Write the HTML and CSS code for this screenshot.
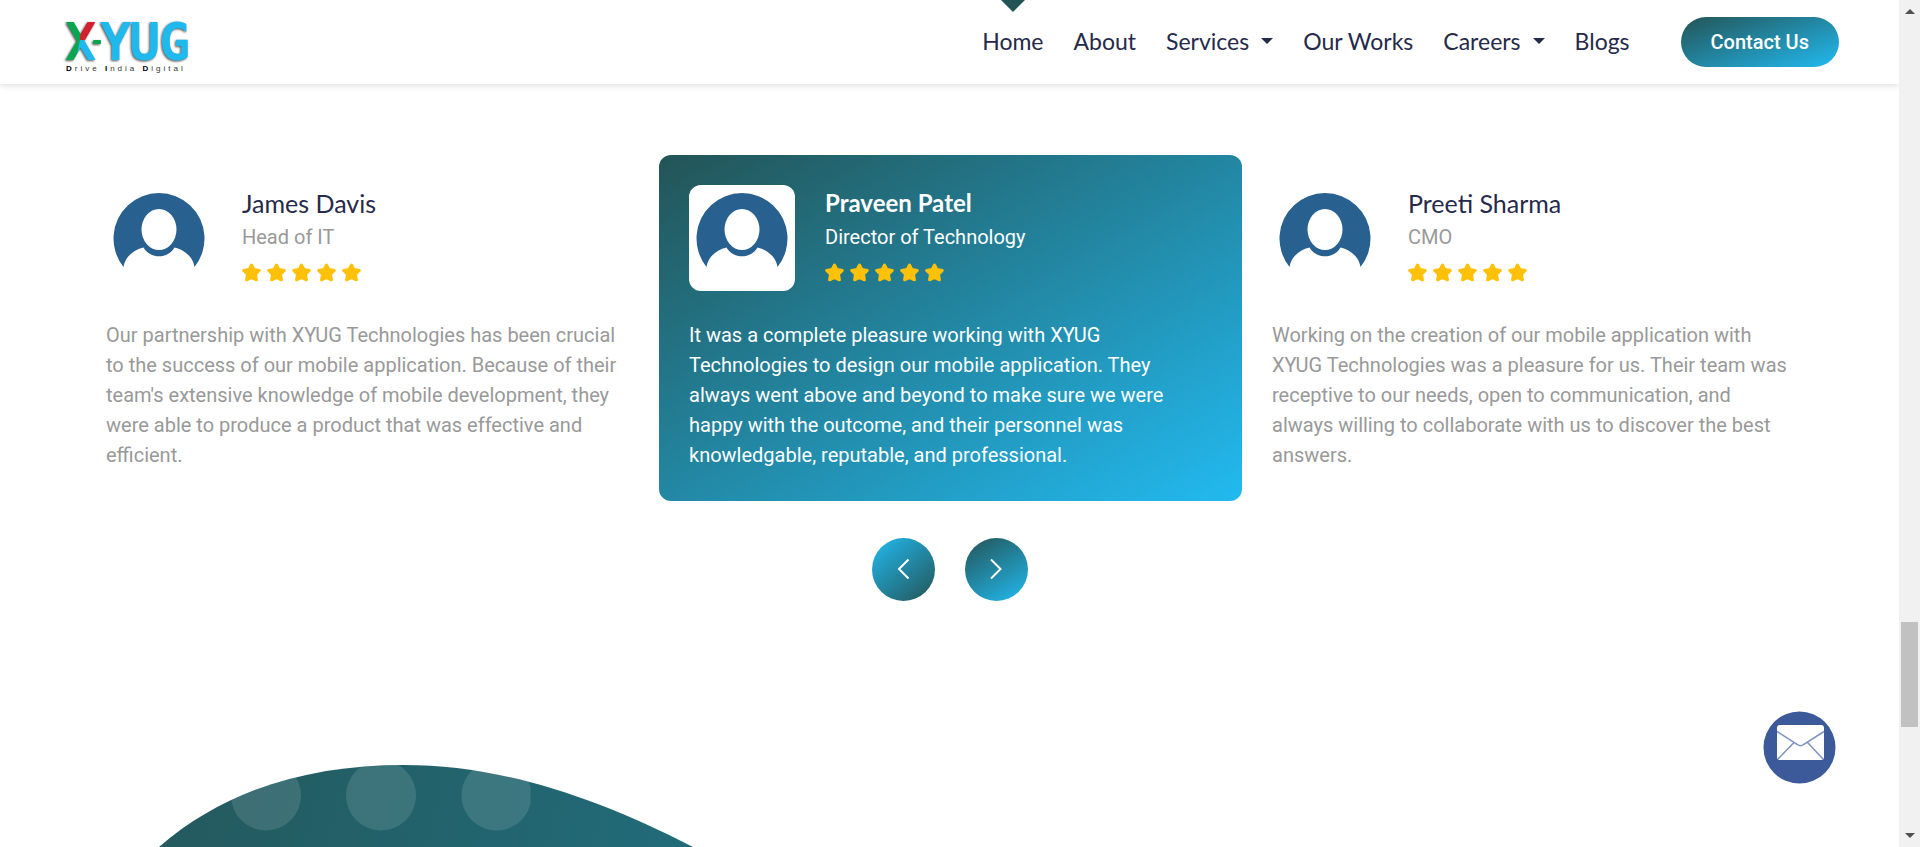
FILE: index.html
```html
<!DOCTYPE html>
<html lang="en">
<head>
<meta charset="utf-8">
<title>X-YUG Testimonials</title>
<link rel="stylesheet" href="styles.css">
</head>
<body>
<svg class="defs" aria-hidden="true">
  <symbol id="avatar" viewBox="0 0 106 106">
    <path fill="#286090" d="M17.500 82A45.500 45.500 0 1 1 88.500 82C87 72 79 65 68.500 62.500A18 18 0 0 1 37.500 62.500C27 65 19 72 17.500 82Z"/>
    <ellipse cx="53" cy="44.500" rx="17.500" ry="20.500" fill="#fff"/>
  </symbol>
  <symbol id="star" viewBox="0 0 19 19">
    <path fill="#ffc107" stroke="#ffc107" stroke-width="3" stroke-linejoin="round" d="M9.500 2L12 6.600L17.300 7.400L13.500 11.200L14.400 16.800L9.500 14.400L4.600 16.800L5.500 11.200L1.700 7.400L7 6.600Z"/>
  </symbol>
</svg>
<div class="window">
  <div class="page">
    <header class="header">
      <a class="logo" href="#" aria-label="X-YUG Drive India Digital">
        <svg width="124" height="54" viewBox="0 0 124 54">
          <defs>
            <pattern id="x-fill" patternUnits="userSpaceOnUse" width="124" height="54">
              <rect width="124" height="54" fill="#0aa64f"/>
              <path d="M16 0H32V20H15Z" fill="#d3202f"/>
              <path d="M15 20H32V54H15L12 34Z" fill="#1fb9ee"/>
            </pattern>
          </defs>
          <g class="logo-word">
            <text x="0" y="40" fill="url(#x-fill)">X</text>
            <text x="35" y="40">Y</text>
            <text x="64" y="40">U</text>
            <text x="94" y="40">G</text>
            <rect x="28" y="20" width="8" height="4" rx="1" fill="#0aa64f"/>
          </g>
          <text class="logo-tag" x="1" y="51"><tspan class="cap">D</tspan>rive <tspan class="cap">I</tspan>ndia <tspan class="cap">D</tspan>igital</text>
        </svg>
      </a>
      <nav class="nav">
        <a class="nav-link current" href="#">Home</a>
        <a class="nav-link" href="#">About</a>
        <a class="nav-link has-menu" href="#">Services</a>
        <a class="nav-link" href="#">Our Works</a>
        <a class="nav-link has-menu" href="#">Careers</a>
        <a class="nav-link" href="#">Blogs</a>
      </nav>
      <a class="contact" href="#">Contact Us</a>
    </header>
    <main class="main">
      <section class="cards">
        <article class="card">
          <div class="person">
            <svg class="photo"><use href="#avatar"/></svg>
            <div class="who">
              <h3 class="name">James Davis</h3>
              <p class="role">Head of IT</p>
              <div class="stars" role="img" aria-label="5 stars">
                <svg><use href="#star"/></svg><svg><use href="#star"/></svg><svg><use href="#star"/></svg><svg><use href="#star"/></svg><svg><use href="#star"/></svg>
              </div>
            </div>
          </div>
          <p class="quote">Our partnership with XYUG Technologies has been crucial to the success of our mobile application. Because of their team's extensive knowledge of mobile development, they were able to produce a product that was effective and efficient.</p>
        </article>
        <article class="card active">
          <div class="person">
            <svg class="photo"><use href="#avatar"/></svg>
            <div class="who">
              <h3 class="name">Praveen Patel</h3>
              <p class="role">Director of Technology</p>
              <div class="stars" role="img" aria-label="5 stars">
                <svg><use href="#star"/></svg><svg><use href="#star"/></svg><svg><use href="#star"/></svg><svg><use href="#star"/></svg><svg><use href="#star"/></svg>
              </div>
            </div>
          </div>
          <p class="quote">It was a complete pleasure working with XYUG Technologies to design our mobile application. They always went above and beyond to make sure we were happy with the outcome, and their personnel was knowledgable, reputable, and professional.</p>
        </article>
        <article class="card">
          <div class="person">
            <svg class="photo"><use href="#avatar"/></svg>
            <div class="who">
              <h3 class="name">Preeti Sharma</h3>
              <p class="role">CMO</p>
              <div class="stars" role="img" aria-label="5 stars">
                <svg><use href="#star"/></svg><svg><use href="#star"/></svg><svg><use href="#star"/></svg><svg><use href="#star"/></svg><svg><use href="#star"/></svg>
              </div>
            </div>
          </div>
          <p class="quote">Working on the creation of our mobile application with XYUG Technologies was a pleasure for us. Their team was receptive to our needs, open to communication, and always willing to collaborate with us to discover the best answers.</p>
        </article>
      </section>
      <div class="arrows">
        <button class="arrow prev" aria-label="Previous"><svg viewBox="0 0 63 63"><path d="M36.500 21.500L27 31L36.500 40.500"/></svg></button>
        <button class="arrow next" aria-label="Next"><svg viewBox="0 0 63 63"><path d="M26 21.500L35.500 31L26 40.500"/></svg></button>
      </div>
    </main>
    <svg class="blob" viewBox="0 0 534 82" aria-hidden="true">
      <defs>
        <linearGradient id="blob-fill" gradientUnits="userSpaceOnUse" x1="60" y1="0" x2="520" y2="110">
          <stop offset="0" stop-color="#235b60"/>
          <stop offset="1" stop-color="#216b79"/>
        </linearGradient>
        <clipPath id="blob-shape"><path id="hill" d="M-1 82C66 24 150 0 244 0C338 0 432 30 533 82Z"/></clipPath>
      </defs>
      <use href="#hill" fill="url(#blob-fill)"/>
      <g clip-path="url(#blob-shape)" fill="#fff" fill-opacity=".12">
        <circle cx="106" cy="30.500" r="35"/>
        <circle cx="221" cy="30.500" r="35"/>
        <path d="M370.500 22.200A35 35 0 1 0 370.500 38.800Z"/>
      </g>
    </svg>
    <a class="mail" href="#" aria-label="Email us">
      <svg viewBox="0 0 73 73">
        <circle cx="36.500" cy="36.500" r="36" fill="#3c5a9a"/>
        <rect x="14" y="14" width="47" height="35" rx="3" fill="#fff"/>
        <path d="M14 20.500L34.500 33.500Q37.500 36 40.500 33.500L61 20.500M15 48L31 31.500M60 48L44.500 31.500" fill="none" stroke="#7d92c0" stroke-width="1.500"/>
      </svg>
    </a>
  </div>
  <div class="scrollbar" aria-hidden="true">
    <span class="tip up"></span>
    <span class="thumb"></span>
    <span class="tip down"></span>
  </div>
</div>
</body>
</html>
```

FILE: styles.css
```css
* { box-sizing: border-box; }
body { margin: 0; background: #fff; font-family: Roboto, "Liberation Sans", sans-serif; font-size: 20px; line-height: 30px; color: #999; }
a { color: inherit; text-decoration: none; }
.defs { display: none; }
.window { display: flex; height: 100vh; overflow: hidden; }
.page { flex: 1; position: relative; display: flex; flex-direction: column; overflow: hidden; }

.header { display: flex; align-items: center; padding: 17px 60px 17px 65px; box-shadow: 0 2px 6px rgba(0, 0, 0, .12); }
.logo { display: flex; margin-right: auto; padding-top: 3px; height: 50px; }
.logo svg { overflow: visible; }
.logo-word { font: bold 52px "DejaVu Sans Mono", monospace; fill: #1fb9ee; filter: drop-shadow(-1px 1px 1px #555); }
.logo-tag { font: 8px "Liberation Sans", sans-serif; letter-spacing: 3px; fill: #333; }
.cap { font-weight: bold; fill: #000; }

.nav { display: flex; gap: 30px; margin-right: 51px; font: 23px/48px Lato, sans-serif; color: #262a4a; padding-bottom: 2px; }
.nav-link { position: relative; display: flex; align-items: center; }
.current::before { content: ""; position: absolute; top: -17px; left: 50%; margin-left: -12px; border: 12px solid transparent; border-top-color: #225456; border-bottom: 0; }
.has-menu::after { content: ""; margin-left: 12px; border: 6px solid transparent; border-top-color: #262a4a; border-bottom: 0; }
.contact { padding: 10px 30px; border-radius: 25px; font-weight: 500; color: #fff; background: linear-gradient(160deg, #235456, #22baf0); }

.main { padding: 71px 74px 0 76px; }
.cards { display: grid; grid-template-columns: repeat(3, 1fr); }
.card { padding: 30px 30px 31px; border-radius: 12px; }
.person { display: flex; gap: 30px; margin-bottom: 29px; }
.photo { width: 106px; height: 106px; border-radius: 12px; background: #fff; }
.who { padding-top: 1px; }
.name { margin: 0 0 2px; font: 25px/34px Lato, sans-serif; color: #262a4a; }
.role, .quote { margin: 0; }
.stars { display: flex; gap: 6px; margin-top: 11px; }
.stars svg { width: 19px; height: 19px; }
.active { color: #fff; background: linear-gradient(150deg, #235456, #22baf0); }
.active .name { color: #fff; font-weight: bold; font-size: 24px; }

.arrows { display: flex; justify-content: center; gap: 30px; margin-top: 37px; padding-right: 2px; }
.arrow { width: 63px; height: 63px; padding: 0; border: 0; border-radius: 50%; }
.arrow svg { display: block; fill: none; stroke: #fff; stroke-width: 2; }
.prev { background: linear-gradient(-40deg, #235456, #22baf0); }
.next { background: linear-gradient(150deg, #235456, #22baf0); }

.blob { flex: none; width: 534px; height: 82px; margin: auto 0 0 160px; overflow: visible; }
.mail { position: absolute; right: 63px; bottom: 63px; width: 73px; height: 73px; }
.mail svg { display: block; }

.scrollbar { display: flex; flex-direction: column; align-items: center; width: 21px; padding: 9px 0; background: #f1f1f1; }
.tip { border: 5px solid transparent; }
.up { border-top: 0; border-bottom-color: #505050; margin-bottom: auto; }
.down { border-bottom: 0; border-top-color: #505050; }
.thumb { width: 17px; height: 105px; margin-bottom: 106px; background: #c1c1c1; }
```
